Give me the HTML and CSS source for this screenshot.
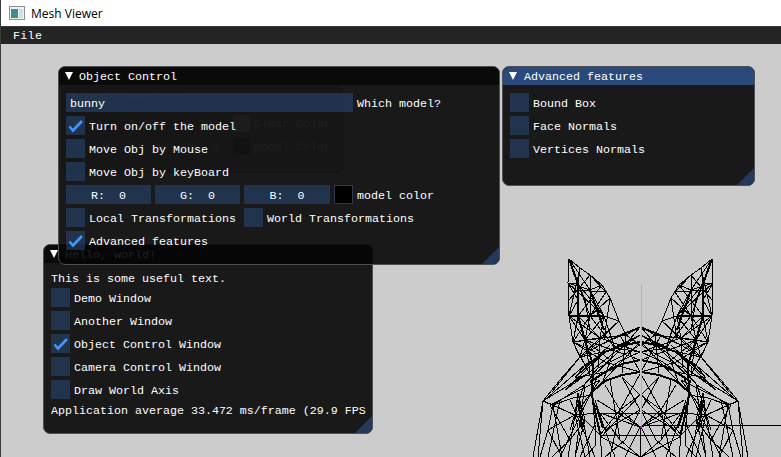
FILE: index.html
```html
<!DOCTYPE html>
<html lang="en">
<head>
    <meta charset="UTF-8">
    <meta name="viewport" content="width=device-width, initial-scale=1.0">
    <title>Mesh Viewer</title>
    <link rel="stylesheet" href="styles.css">
</head>
<body>
    <svg class="defs" width="0" height="0">
        <symbol id="check" viewBox="0 0 19 19">
            <polyline points="3.5,10.5 7,14.5 16,5" fill="none" stroke="#4296fa" stroke-width="2.6"/>
        </symbol>
    </svg>

    <div class="titlebar">
        <svg class="app-icon" width="16" height="14" viewBox="0 0 16 14">
            <rect x="0.5" y="0.5" width="15" height="13" fill="#f2f2f2" stroke="#8a8f94"/>
            <rect x="2" y="3" width="7" height="9" fill="#3f8f86"/>
            <rect x="2" y="3" width="7" height="3" fill="#4f7fb0"/>
            <rect x="10" y="3" width="4" height="9" fill="#d5dde4"/>
        </svg>
        <span class="app-title">Mesh Viewer</span>
    </div>

    <div class="menubar"><span class="menu-item">File</span></div>

    <div class="canvas">
        <!-- wireframe: left half is drawn, right half mirrored -->
        <svg class="scene" width="781" height="413" viewBox="0 44 781 413">
            <g id="half" class="mesh">
                <path d="M569 259L568 283L569 316L573 342L580 357M569 259L580 268L590 275L602 285L610 298L619 321L626 335L640 327"/>
                <path d="M569 259L590 290L604 316L615 348M580 268L578 284L568 283L590 290L602 285M568 283L578 300L569 316"/>
                <path d="M578 284L604 316L590 316L578 284M590 275L590 316L573 342M578 316L600 338M590 316L585 340L604 316L600 338L619 321"/>
                <path d="M604 316L619 321M573 342L585 340L600 338L626 335M569 316L585 340M573 342L595 352M580 357L600 338M573 342L626 335M590 275L606 292L590 316"/>
                <path d="M569 259L585 300L590 330M580 268L569 316M590 275L569 300M568 283L604 316M575 290L606 292M602 285L578 316M610 298L590 316M610 298L604 340"/>
                <path d="M619 321L590 350M569 316L600 338M590 316L615 348M578 316L573 342M573 342L590 375M580 357L585 340M585 340L610 360"/>
                <path d="M580 357L600 345L620 335L640 327M640 327L625 345L605 352L585 365L575 378M640 335L615 352L590 372L565 390"/>
                <path d="M640 345L620 357L598 368L584 385M640 352L618 362L597 378L590 395M626 335L640 345M615 348L640 352M605 352L640 335"/>
                <path d="M573 342L605 362L640 372M600 338L640 352M585 340L640 360M580 357L612 350L640 335M620 335L640 372M575 378L605 372M590 395L640 342M565 390L605 352"/>
                <path d="M585 340L590 372M600 338L598 368M615 348L603 381M626 335L622 373M600 345L640 327M575 378L610 345M584 385L625 345"/>
                <path d="M580 357L560 380L543 401M580 357L552 392M585 365L546 399M590 372L543 401M600 380L550 405M584 385L553 405"/>
                <path d="M543 401L533 457M543 401L553 405L573 398L592 395M543 401L538 457M553 405L548 430L540 457M553 405L562 457M543 401L575 415"/>
                <path d="M578 393L575 415L568 457M578 393L585 420L600 435L602 457M592 395L595 425L596 445L585 457M595 400L605 430L615 457"/>
                <path d="M605 385L620 410L640 427L625 457M622 377L640 410L625 440L605 457M640 374L620 410L600 435M600 413L640 413"/>
                <path d="M600 413L620 440L640 457M600 435L640 435M640 395L620 410L605 385M640 395L622 377"/>
                <path d="M578 393L590 457M570 400L595 457M585 385L575 457M590 395L560 457M597 420L580 457M601 437L640 395M597 400L640 427M605 430L640 410"/>
                <path d="M610 380L620 440M620 410L610 457M640 427L600 413M601 437L640 457M584 385L570 430M550 405L570 440M600 380L575 415"/>
                <path d="M575 415L600 413M553 405L585 420L570 440L552 457M548 430L575 415M548 430L562 457M575 415L585 457M585 420L575 457M560 400L548 457"/>
                <path class="thick" d="M569 259L578 284L578 316L585 340L593 365L592 395L597 420L601 437M569 316L604 316M590 290L604 330"/>
                <path class="thick" d="M586 366L605 352L620 346L640 342M590 382L605 372L622 364L640 360M592 392L605 381L622 375L640 372"/>
                <path class="thick" d="M578 400L583 432M596 405L603 428"/>
            </g>
            <use href="#half" transform="matrix(-1 0 0 1 1281 0)"/>
            <path class="axis-x" d="M641 425.5H781"/>
            <path class="axis-z" d="M640.5 427V457"/>
            <path class="axis-y" d="M641.5 285V427"/>
            <rect class="axis-o" x="640" y="426" width="2" height="2"/>
        </svg>

        <!-- almost hidden under Object Control -->
        <div class="window ghost">
            <div class="ghost-title"><span class="arrow"></span><span>MeshViewer Menu</span></div>
            <div class="ghost-row">
                <span class="ghost-num">R:204</span>
                <span class="ghost-num">G:204</span>
                <span class="ghost-num">B:204</span>
                <span class="ghost-swatch light"></span>
                <span>Clear Color</span>
            </div>
            <div class="ghost-row">
                <span class="ghost-num">R:  0</span>
                <span class="ghost-num">G:  0</span>
                <span class="ghost-num">B:  0</span>
                <span class="ghost-swatch"></span>
                <span>model Color</span>
            </div>
        </div>

        <div class="window hello">
            <div class="win-title"><span class="arrow"></span><span>Hello, world!</span></div>
            <div class="win-body">
                <div class="text-line">This is some useful text.</div>
                <div class="row"><span class="box"></span><span>Demo Window</span></div>
                <div class="row"><span class="box"></span><span>Another Window</span></div>
                <div class="row"><span class="box"><svg width="19" height="19"><use href="#check"/></svg></span><span>Object Control Window</span></div>
                <div class="row"><span class="box"></span><span>Camera Control Window</span></div>
                <div class="row"><span class="box"></span><span>Draw World Axis</span></div>
                <div class="text-line clip">Application average 33.472 ms/frame (29.9 FPS)</div>
            </div>
            <span class="grip"></span>
        </div>

        <div class="window object">
            <div class="win-title"><span class="arrow"></span><span>Object Control</span></div>
            <div class="win-body">
                <div class="row">
                    <div class="frame model-input">bunny</div>
                    <span>Which model?</span>
                </div>
                <div class="row"><span class="box"><svg width="19" height="19"><use href="#check"/></svg></span><span>Turn on/off the model</span></div>
                <div class="row"><span class="box"></span><span>Move Obj by Mouse</span></div>
                <div class="row"><span class="box"></span><span>Move Obj by keyBoard</span></div>
                <div class="row">
                    <div class="frame slider">R:  0</div>
                    <div class="frame slider">G:  0</div>
                    <div class="frame slider wide">B:  0</div>
                    <span class="swatch"></span>
                    <span>model color</span>
                </div>
                <div class="row">
                    <span class="box"></span><span class="local-label">Local Transformations</span>
                    <span class="box"></span><span>World Transformations</span>
                </div>
                <div class="row"><span class="box"><svg width="19" height="19"><use href="#check"/></svg></span><span>Advanced features</span></div>
            </div>
            <span class="grip"></span>
        </div>

        <div class="window advanced">
            <div class="win-title active"><span class="arrow"></span><span>Advanced features</span></div>
            <div class="win-body">
                <div class="row"><span class="box"></span><span>Bound Box</span></div>
                <div class="row"><span class="box"></span><span>Face Normals</span></div>
                <div class="row"><span class="box"></span><span>Vertices Normals</span></div>
            </div>
            <span class="grip"></span>
        </div>
    </div>
</body>
</html>
```

FILE: styles.css
```css
html, body {
    margin: 0;
    height: 100%;
}
body {
    width: 781px;
    height: 457px;
    overflow: hidden;
    display: flex;
    flex-direction: column;
    box-sizing: border-box;
    border-left: 1px solid #3c3c3c;
    background: #cccccc;
    font-family: "Liberation Mono", monospace;
    font-size: 11.67px;
    color: #ffffff;
}
.defs {
    position: absolute;
}

/* native title bar */
.titlebar {
    height: 26px;
    flex: none;
    display: flex;
    align-items: center;
    gap: 6px;
    padding-left: 8px;
    background: #ffffff;
    color: #000000;
    font-family: "Open Sans", sans-serif;
    font-size: 12px;
}
.menubar {
    height: 18px;
    flex: none;
    display: flex;
    align-items: center;
    background: #242424;
    border-top: 1px solid #3a3a3a;
    box-sizing: border-box;
}
.menu-item {
    margin-left: 12px;
    letter-spacing: 0.3px;
}

.canvas {
    position: relative;
    flex: 1;
}
.scene {
    position: absolute;
    left: -1px;
    top: 0;
}
.mesh {
    fill: none;
    stroke: #000000;
    stroke-width: 1;
    shape-rendering: crispEdges;
}
.mesh .thick {
    stroke-width: 2;
}
.axis-x, .axis-z, .axis-y {
    fill: none;
    stroke-width: 1;
    shape-rendering: crispEdges;
}
.axis-x, .axis-z {
    stroke: #000000;
}
.axis-y {
    stroke: #20f0f0;
}
.axis-o {
    fill: #c000c0;
}

/* imgui style windows, placed on the free canvas */
.window {
    position: absolute;
    box-sizing: border-box;
    border: 1px solid #4f4f56;
    border-radius: 7px;
    overflow: hidden;
    background: rgba(6, 6, 6, 0.9);
}
.win-title {
    height: 18px;
    display: flex;
    align-items: center;
    gap: 7px;
    padding-left: 6px;
    background: #0a0a0a;
}
.win-title.active {
    background: #294a7a;
}
.arrow {
    width: 0;
    height: 0;
    border-left: 4px solid transparent;
    border-right: 4px solid transparent;
    border-top: 8px solid #ffffff;
}
.win-title span:last-child {
    padding-top: 2px;
}
.win-body {
    display: flex;
    flex-direction: column;
    gap: 4px;
    padding: 8px 7px;
}
.row {
    height: 19px;
    display: flex;
    align-items: center;
    gap: 4px;
    white-space: pre;
}
.row > span:not(.box):not(.swatch) {
    padding-top: 2px;
}
.box, .frame {
    background: rgba(41, 74, 122, 0.54);
}
.box {
    width: 19px;
    height: 19px;
    flex: none;
}
.box svg {
    display: block;
}
.frame {
    height: 19px;
    display: flex;
    align-items: center;
    box-sizing: border-box;
    padding-top: 2px;
}
.model-input {
    width: 287px;
    padding-left: 4px;
}
.slider {
    width: 85px;
    justify-content: center;
    white-space: pre;
}
.slider.wide {
    width: 86px;
}
.swatch {
    width: 19px;
    height: 19px;
    box-sizing: border-box;
    background: #000000;
    border: 1px solid #2c3a50;
}
.local-label {
    width: 151px;
}
.grip {
    position: absolute;
    right: 0;
    bottom: 0;
    width: 17px;
    height: 17px;
    background: #243a58;
    clip-path: polygon(100% 0, 100% 100%, 0 100%);
}
.object {
    left: 57px;
    top: 22px;
    width: 442px;
    height: 199px;
}
.object .win-title {
    gap: 6px;
}
.advanced {
    left: 501px;
    top: 22px;
    width: 253px;
    height: 120px;
}
.hello {
    left: 42px;
    top: 200px;
    width: 330px;
    height: 190px;
}
.text-line {
    height: 19px;
    display: flex;
    align-items: center;
    white-space: pre;
}
.text-line.clip {
    overflow: hidden;
    width: 315px;
    margin-top: -2px;
}
.hello .text-line:first-child {
    margin-top: -2px;
    margin-bottom: -4px;
}

/* the menu window that sits under Object Control */
.ghost {
    left: 61px;
    top: 42px;
    width: 281px;
    height: 87px;
    padding: 0 3px;
    border-color: #8a8a8a;
    background: #a8a8a8;
}
.ghost-title {
    height: 19px;
    display: flex;
    align-items: center;
    gap: 7px;
    padding-left: 3px;
}
.ghost-row {
    height: 19px;
    margin-top: 4px;
    display: flex;
    align-items: center;
    gap: 4px;
    white-space: pre;
}
.ghost-title + .ghost-row {
    margin-top: 8px;
}
.ghost-num {
    width: 51px;
    text-align: center;
}
.ghost-swatch {
    width: 17px;
    height: 17px;
    margin-left: 2px;
    background: #888888;
}
.ghost-swatch.light {
    background: #e8e8e8;
}
```
